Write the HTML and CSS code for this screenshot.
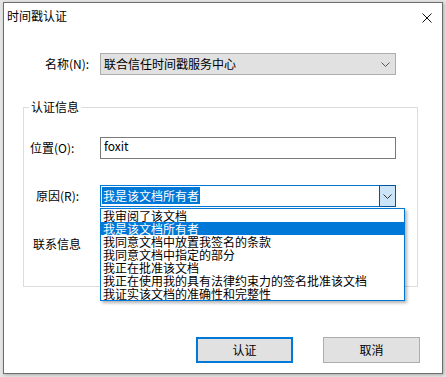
FILE: index.html
```html
<!DOCTYPE html>
<html lang="zh-CN">
<head>
<meta charset="utf-8">
<title>时间戳认证</title>
<link rel="stylesheet" href="styles.css">
</head>
<body>
<div class="desktop">
  <div class="window">
    <div class="titlebar">
      <span class="title">时间戳认证</span>
      <svg class="close" width="10" height="10" viewBox="0 0 10 10"><path d="M0.5 0.5 L9.5 9.5 M9.5 0.5 L0.5 9.5" stroke="#111" stroke-width="1" fill="none"/></svg>
    </div>
    <div class="row row-name">
      <label class="lbl lbl-name">名称(N):</label>
      <div class="field combo-ro">
        <span class="combo-text">联合信任时间戳服务中心</span>
        <svg class="chev" width="9" height="5" viewBox="0 0 9 5"><path d="M0.5 0.5 L4.5 4.5 L8.5 0.5" stroke="#555" stroke-width="1" fill="none"/></svg>
      </div>
    </div>
    <fieldset class="group">
      <legend>认证信息</legend>
      <div class="row row-loc">
        <label class="glbl glbl-loc">位置(O):</label>
        <div class="field textbox">foxit</div>
      </div>
      <div class="row row-gap">
        <label class="glbl glbl-reason">原因(R):</label>
        <div class="field combo-edit">
          <span class="sel-text">我是该文档所有者</span>
          <span class="drop-btn"><svg width="9" height="5" viewBox="0 0 9 5"><path d="M0.5 0.5 L4.5 4.5 L8.5 0.5" stroke="#333" stroke-width="1" fill="none"/></svg></span>
        </div>
      </div>
      <div class="row row-gap">
        <label class="glbl glbl-contact">联系信息</label>
        <div class="field textbox"></div>
      </div>
    </fieldset>
    <div class="buttons">
      <button class="btn btn-default">认证</button>
      <button class="btn">取消</button>
    </div>
    <ul class="dropdown">
      <li>我审阅了该文档</li>
      <li class="active">我是该文档所有者</li>
      <li>我同意文档中放置我签名的条款</li>
      <li>我同意文档中指定的部分</li>
      <li>我正在批准该文档</li>
      <li>我正在使用我的具有法律约束力的签名批准该文档</li>
      <li>我证实该文档的准确性和完整性</li>
    </ul>
  </div>
</div>
</body>
</html>
```
FILE: styles.css
```css
* { box-sizing: border-box; }
html, body { margin: 0; padding: 0; }
body {
  background: #e4e4e4;
  font-family: "Noto Sans CJK SC", "Microsoft YaHei", sans-serif;
  font-size: 12px;
  color: #000;
  width: 446px;
  height: 377px;
  overflow: hidden;
}
.desktop { padding: 2px 0 0 3px; }
.window {
  position: relative;
  width: 440px;
  height: 372px;
  background: #fff;
  border: 1px solid #6e6e6e;
  box-shadow: 1px 1px 3px rgba(0,0,0,0.25);
}
.titlebar {
  height: 26px;
  display: flex;
  align-items: center;
  justify-content: space-between;
  padding-left: 3px;
  padding-right: 10px;
}
.title { line-height: 26px; }
.close { margin-top: 3px; display: block; }

.row { display: flex; align-items: center; }
.row-name { margin-top: 24px; }
.lbl { width: 96px; padding-left: 41px; line-height: 16px; }

.field { width: 296px; height: 22px; }
.combo-ro {
  background: #e1e1e1;
  border: 1px solid #adadad;
  display: flex;
  align-items: center;
  justify-content: space-between;
  padding: 0 5px 0 3px;
}
.combo-text { line-height: 16px; }
.chev { display: block; }

.group {
  margin: 25px 0 0 19px;
  width: 395px;
  padding: 0 0 31px 0;
  border: 1px solid #dcdcdc;
  min-width: 0;
}
.group legend {
  margin-left: 5px;
  padding: 0 2px;
  line-height: 14px;
}
.row-loc { margin-top: 23px; }
.row-gap { margin-top: 26px; }
.glbl { width: 76px; line-height: 16px; }
.glbl-loc { padding-left: 6px; }
.glbl-reason { padding-left: 12px; }
.glbl-contact { padding-left: 9px; }

.textbox {
  border: 1px solid #7a7a7a;
  padding: 0 3px;
  line-height: 16px;
  align-self: flex-start;
}
.combo-edit {
  border: 1px solid #0078d7;
  display: flex;
  background: #fff;
}
.sel-text {
  align-self: flex-start;
  margin: 1px 0 0 1px;
  padding: 0 1px;
  line-height: 17px;
  background: #0078d7;
  color: #fff;
}
.drop-btn {
  width: 17px;
  margin: -1px -1px -1px auto;
  border: 1px solid #005499;
  background: #cce4f7;
  display: flex;
  align-items: center;
  justify-content: center;
}
.drop-btn svg { display: block; }

.buttons {
  display: flex;
  justify-content: flex-end;
  gap: 30px;
  margin-top: 50px;
  padding-right: 22px;
}
.btn {
  width: 97px;
  height: 26px;
  background: #e1e1e1;
  border: 1px solid #adadad;
  font-family: inherit;
  font-size: 12px;
  color: #000;
  padding: 0;
  line-height: 16px;
}
.btn-default { border: 2px solid #0078d7; }

.dropdown {
  position: absolute;
  left: 96px;
  top: 205px;
  width: 305px;
  margin: 0;
  padding: 0;
  list-style: none;
  background: #fff;
  border: 1px solid #0078d7;
  box-shadow: 2px 2px 3px rgba(0,0,0,0.3);
}
.dropdown li {
  line-height: 13px;
  height: 13px;
  padding-left: 2px;
  white-space: nowrap;
}
.dropdown li.active { background: #0078d7; color: #fff; }
```
